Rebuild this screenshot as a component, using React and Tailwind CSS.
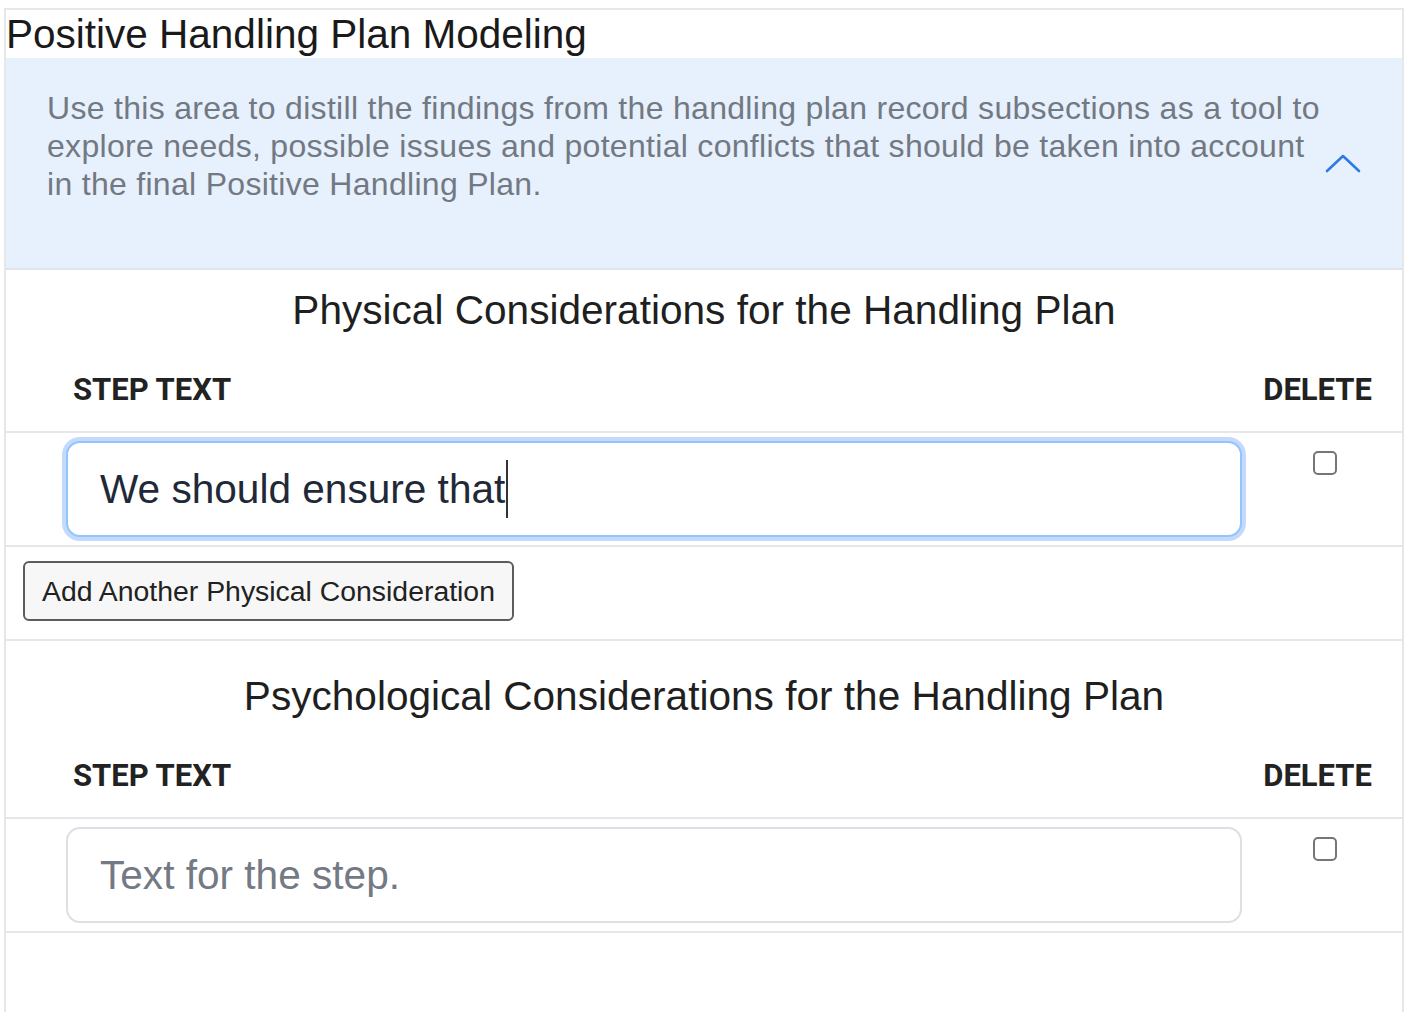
import React from "react";

const sans = "font-['Liberation_Sans',Arial,sans-serif]";

const ColumnHeader = () => (
  <div className="flex items-center justify-between border-b-2 border-[#e5e7eb] pt-[38px] pb-[23px] pl-[67px] pr-[30px] font-['Roboto',sans-serif] text-[31px] leading-[36px] font-bold text-[#222]">
    <span>STEP TEXT</span>
    <span>DELETE</span>
  </div>
);

const Checkbox = () => (
  <span className="mt-[10px] ml-[71px] block h-[24px] w-[24px] rounded-[5px] border-2 border-[#767676] bg-white"></span>
);

const StepRow = ({ focused, value, placeholder }) => (
  <div className="flex items-start border-b-2 border-[#e5e7eb] py-2 pl-[60px]">
    {focused ? (
      <div className="flex h-[96px] w-[1176px] items-center rounded-[14px] border-2 border-[#93c5fd] bg-white pl-[32px] ring-4 ring-[#c3dafd]">
        <span className="text-[40.6px] text-[#1f2937]">{value}</span>
        <span className="ml-[1px] block h-[58px] w-[2px] bg-[#333]"></span>
      </div>
    ) : (
      <input
        type="text"
        readOnly
        placeholder={placeholder}
        className="h-[96px] w-[1176px] rounded-[14px] border-2 border-[#dcdfe4] bg-white pl-[32px] text-[40.6px] text-[#1f2937] outline-none placeholder:text-[#737a84]"
      />
    )}
    <Checkbox />
  </div>
);

export default function App() {
  return (
    <div className={`min-h-screen bg-white pt-[8px] ${sans}`}>
      <div className="ml-[4px] min-h-[1004px] w-[1400px] border-x-2 border-t-2 border-[#e5e7eb]">
        <h2 className="text-[40.5px] leading-[48px] text-[#1a1a1a]">Positive Handling Plan Modeling</h2>

        {/* Intro panel */}
        <div className="flex items-center border-b-2 border-[#e0e5ec] bg-[#e7f0fd]">
          <p className="w-[1321px] shrink-0 pt-[31px] pb-[65px] pl-[41px] text-[32px] leading-[38px] tracking-[0.3px] text-[#727982]">
            Use this area to distill the findings from the handling plan record subsections as a tool to explore needs, possible issues and potential conflicts that should be taken into account in the final Positive Handling Plan.
          </p>
          <svg width="36" height="22" viewBox="0 0 36 22" className="ml-[-2px]">
            <polyline points="2,19 18,4 34,19" fill="none" stroke="#2f7be6" strokeWidth="2.6" strokeLinecap="round" strokeLinejoin="round" />
          </svg>
        </div>

        {/* Physical */}
        <h3 className="pt-[16px] text-center text-[40.6px] leading-[48px] text-[#1f1f1f]">
          Physical Considerations for the Handling Plan
        </h3>
        <ColumnHeader />
        <StepRow focused value="We should ensure that" />
        <div className="border-b-2 border-[#e5e7eb] pt-[14px] pb-[18px] pl-[17px]">
          <button className="h-[60px] rounded-[6px] border-2 border-[#5c5c5c] bg-[#f7f7f7] px-[17px] text-[28.4px] text-[#222]">
            Add Another Physical Consideration
          </button>
        </div>

        {/* Psychological */}
        <h3 className="pt-[31px] text-center text-[40.6px] leading-[48px] text-[#1f1f1f]">
          Psychological Considerations for the Handling Plan
        </h3>
        <ColumnHeader />
        <StepRow placeholder="Text for the step." />
      </div>
    </div>
  );
}
